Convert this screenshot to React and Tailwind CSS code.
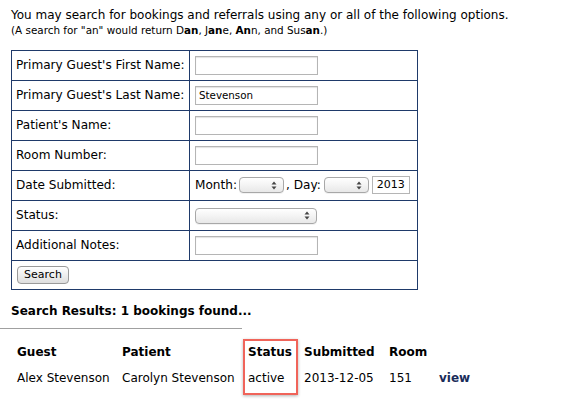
import React from "react";

const font = { fontFamily: '"DejaVu Sans", Verdana, sans-serif' };

function Arrows() {
  return (
    <svg width="6" height="9" viewBox="0 0 6 9" className="block">
      <path d="M3 0.5 L5.5 3.5 H0.5 Z" fill="#444" />
      <path d="M3 8.5 L5.5 5.5 H0.5 Z" fill="#444" />
    </svg>
  );
}

function Select({ w }) {
  return (
    <div
      className={`${w} h-[16px] rounded-[4px] border border-[#a8a8a8] bg-gradient-to-b from-white to-[#e8e8e8] flex items-center justify-end pr-[6px] shadow-[0_1px_0_rgba(0,0,0,0.05)]`}
    >
      <Arrows />
    </div>
  );
}

function TextInput({ value }) {
  return (
    <div className="w-[123px] h-[19px] border border-[#b5b5b5] bg-white flex items-center pl-[3px] text-[10.3px] shadow-[inset_0_1px_1px_rgba(0,0,0,0.12)]">
      {value}
    </div>
  );
}

const cellL = "border border-[#1f3a6a] px-[4px] h-[30px] align-middle";
const cellR = "border border-[#1f3a6a] pl-[5px] pr-[4px] h-[30px] align-middle";

export default function App() {
  return (
    <div className="w-[572px] h-[403px] bg-white text-black pl-[11px] pt-[7px]" style={font}>
      <div className="text-[12px] leading-[16px]">
        You may search for bookings and referrals using any or all of the following options.
      </div>
      <div className="text-[10.4px] leading-[14px]">
        (A search for "an" would return D<b>an</b>, J<b>an</b>e, <b>An</b>n, and Sus<b>an</b>.)
      </div>
      <table className="mt-[13px] border-collapse w-[407px] text-[12.1px]">
        <tbody>
          <tr>
            <td className={`${cellL} w-[178px]`}>Primary Guest's First Name:</td>
            <td className={cellR}><TextInput /></td>
          </tr>
          <tr>
            <td className={cellL}>Primary Guest's Last Name:</td>
            <td className={cellR}><TextInput value="Stevenson" /></td>
          </tr>
          <tr>
            <td className={cellL}>Patient's Name:</td>
            <td className={cellR}><TextInput /></td>
          </tr>
          <tr>
            <td className={cellL}>Room Number:</td>
            <td className={cellR}><TextInput /></td>
          </tr>
          <tr>
            <td className={cellL}>Date Submitted:</td>
            <td className="border border-[#1f3a6a] pl-[5px] h-[30px] align-middle">
              <div className="flex items-center">
                <span>Month:</span>
                <div className="ml-[2px]"><Select w="w-[45px]" /></div>
                <span className="ml-[2px]">, Day:</span>
                <div className="ml-[3px]"><Select w="w-[45px]" /></div>
                <div className="ml-[3px] w-[38px] h-[18px] border border-[#b5b5b5] flex items-center justify-center text-[11px]">2013</div>
              </div>
            </td>
          </tr>
          <tr>
            <td className={cellL}>Status:</td>
            <td className={cellR}><Select w="w-[122px]" /></td>
          </tr>
          <tr>
            <td className={cellL}>Additional Notes:</td>
            <td className={cellR}><TextInput /></td>
          </tr>
          <tr>
            <td colSpan={2} className="border border-[#1f3a6a] px-[5px] h-[29px] align-middle">
              <div className="w-[52px] h-[18px] rounded-[4px] border border-[#9a9a9a] bg-gradient-to-b from-white to-[#dedede] flex items-center justify-center text-[11px]">
                Search
              </div>
            </td>
          </tr>
        </tbody>
      </table>
      <div className="mt-[14px] text-[12px] font-bold leading-[14px]">Search Results: 1 bookings found...</div>
      <div className="-ml-[11px] mt-[10px] w-[242px] h-px bg-[#a0a0a0]"></div>
      <div className="relative mt-[10px] text-[12px]">
        <div className="flex h-[25px] items-center font-bold">
          <div className="w-[111px] pl-[6px]">Guest</div>
          <div className="w-[126px]">Patient</div>
          <div className="w-[56px]">Status</div>
          <div className="w-[85px]">Submitted</div>
          <div className="w-[50px]">Room</div>
        </div>
        <div className="flex h-[28px] items-center">
          <div className="w-[111px] pl-[6px]">Alex Stevenson</div>
          <div className="w-[126px]">Carolyn Stevenson</div>
          <div className="w-[56px]">active</div>
          <div className="w-[85px]">2013-12-05</div>
          <div className="w-[50px]">151</div>
          <div className="font-bold text-[#1a2c5a]">view</div>
        </div>
        <div className="absolute left-[232px] top-[0px] w-[55px] h-[56px] border-2 border-[#f0645a] shadow-[0_1px_3px_rgba(0,0,0,0.3)]"></div>
      </div>
    </div>
  );
}
